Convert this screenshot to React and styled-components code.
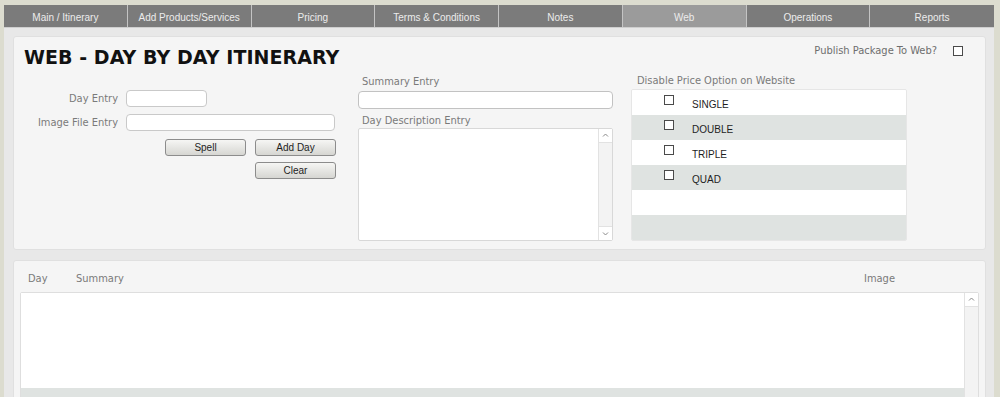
import React from "react";
import styled, { createGlobalStyle } from "styled-components";

const GlobalStyle = createGlobalStyle`
  html, body {
    margin: 0;
    padding: 0;
    background: #dcdccf;
  }
  body {
    font-family: "DejaVu Sans Condensed", "DejaVu Sans", sans-serif;
  }
`;

const tabs = [
  "Main / Itinerary",
  "Add Products/Services",
  "Pricing",
  "Terms & Conditions",
  "Notes",
  "Web",
  "Operations",
  "Reports",
];

const priceOptions = ["SINGLE", "DOUBLE", "TRIPLE", "QUAD", "", ""];

const Page = styled.div`
  margin: 5px 6px 0 4px;
  background: #e8e8e8;
  height: 392px;
  overflow: hidden;
`;

const TabBar = styled.div`
  display: grid;
  grid-template-columns: repeat(8, 1fr);
  height: 22px;
  border-bottom: 1px solid #cfcfcf;
`;

const Tab = styled.div`
  display: flex;
  align-items: center;
  justify-content: center;
  padding-top: 2px;
  box-sizing: border-box;
  background: ${(p) => (p.active ? "#9b9b9b" : "#7b7b7b")};
  color: #ececec;
  font-family: "Liberation Sans", Arial, sans-serif;
  font-size: 10px;
  border-right: 1px solid #c4c4c4;
  &:last-child {
    border-right: none;
  }
`;

const Content = styled.div`
  padding: 8px 8px 0 9px;
  display: flex;
  flex-direction: column;
  gap: 10px;
`;

const Panel = styled.div`
  background: #f5f5f5;
  border: 1px solid #e0e0e0;
  border-radius: 3px;
`;

const TopPanel = styled(Panel)`
  height: 212px;
  padding: 0 10px 0 10px;
`;

const Header = styled.div`
  display: flex;
  justify-content: space-between;
  align-items: flex-start;
  height: 37px;
`;

const Title = styled.h1`
  margin: 9px 0 0 0;
  font-family: "DejaVu Sans", Verdana, sans-serif;
  font-weight: bold;
  font-size: 19px;
  line-height: 22px;
  color: #111;
  letter-spacing: 0.05px;
`;

const Publish = styled.label`
  margin: 7px 12px 0 0;
  display: flex;
  align-items: center;
  gap: 16px;
  font-size: 11px;
  color: #6e6e6e;
`;

const Box = styled.span`
  display: inline-block;
  width: 8px;
  height: 8px;
  border: 1px solid #4a4a4a;
  background: #fff;
`;

const Body = styled.div`
  display: grid;
  grid-template-columns: 326px 255px 276px;
  column-gap: 18px;
  margin-left: -10px;
`;

const LeftForm = styled.div`
  display: grid;
  grid-template-columns: 104px auto;
  column-gap: 8px;
  align-content: start;
  row-gap: 7px;
  padding-top: 16px;
`;

const FieldLabel = styled.span`
  text-align: right;
  font-size: 11px;
  color: #7a7a7a;
  line-height: 17px;
`;

const Input = styled.div`
  width: ${(p) => p.w}px;
  height: 15px;
  background: #fff;
  border: 1px solid #c9c9c9;
  border-radius: 4px;
`;

const ButtonGrid = styled.div`
  grid-column: 2;
  display: grid;
  grid-template-columns: 81px 81px;
  column-gap: 9px;
  row-gap: 6px;
  margin-left: 39px;
  margin-top: 1px;
`;

const Button = styled.button`
  grid-column: ${(p) => p.col || "auto"};
  height: 17px;
  padding: 0;
  border: 1px solid #8c8c8c;
  border-radius: 3px;
  background: linear-gradient(#f6f6f4, #d6d6d2);
  font-family: "Liberation Sans", Arial, sans-serif;
  font-size: 10px;
  color: #1e1e1e;
`;

const Column = styled.div`
  display: flex;
  flex-direction: column;
`;

const ColLabel = styled.span`
  font-size: 11px;
  color: #7a7a7a;
  line-height: 14px;
  height: 14px;
  padding-left: ${(p) => p.pl || 4}px;
  margin-top: ${(p) => p.mt || 0}px;
`;

const WideInput = styled.div`
  height: 16px;
  margin-top: 2px;
  background: #fff;
  border: 1px solid #c2c2c2;
  border-radius: 4px;
`;

const TextArea = styled.div`
  display: flex;
  height: 111px;
  background: #fff;
  border: 1px solid #d8d8d8;
  border-radius: 2px;
`;

const TextBody = styled.div`
  flex: 1;
`;

const ScrollBar = styled.div`
  width: 13px;
  border-left: 1px solid #e2e2e2;
  background: #f3f3f3;
  display: flex;
  flex-direction: column;
  justify-content: space-between;
`;

const ScrollButton = styled.div`
  height: 13px;
  background: #fff;
  display: flex;
  align-items: center;
  justify-content: center;
  border-${(p) => (p.down ? "top" : "bottom")}: 1px solid #e2e2e2;
`;

const Chevron = ({ down }) => (
  <svg width="7" height="5" viewBox="0 0 7 5">
    <path
      d={down ? "M1 1.5 L3.5 4 L6 1.5" : "M1 3.5 L3.5 1 L6 3.5"}
      fill="none"
      stroke="#8a8a8a"
      strokeWidth="1"
    />
  </svg>
);

const OptionTable = styled.div`
  margin-top: 1px;
  border: 1px solid #e6e6e6;
  border-radius: 2px;
  overflow: hidden;
`;

const OptionRow = styled.div`
  display: flex;
  align-items: center;
  height: 25px;
  background: ${(p) => (p.shaded ? "#dfe3e1" : "#fff")};
`;

const OptionBox = styled(Box)`
  margin: 0 18px 6px 32px;
`;

const OptionText = styled.span`
  font-family: "Liberation Sans", Arial, sans-serif;
  font-size: 10px;
  color: #1e1e1e;
  padding-top: 3px;
`;

const ListPanel = styled(Panel)`
  height: 160px;
  padding: 0 6px 0 6px;
`;

const ListHeader = styled.div`
  display: grid;
  grid-template-columns: 48px 788px auto;
  height: 31px;
  align-items: end;
  padding: 0 0 7px 8px;
  box-sizing: border-box;
  font-size: 11px;
  color: #7a7a7a;
`;

const ListBox = styled.div`
  display: flex;
  height: 110px;
  background: #fff;
  border: 1px solid #dedede;
  border-radius: 2px;
`;

const ListRows = styled.div`
  flex: 1;
  display: flex;
  flex-direction: column;
`;

const ListRow = styled.div`
  height: ${(p) => p.h}px;
  background: ${(p) => (p.shaded ? "#dfe3e1" : "#fff")};
`;

export default function App() {
  return (
    <>
      <GlobalStyle />
      <Page>
        <TabBar>
          {tabs.map((t) => (
            <Tab key={t} active={t === "Web"}>
              {t}
            </Tab>
          ))}
        </TabBar>
        <Content>
          <TopPanel>
            <Header>
              <Title>WEB - DAY BY DAY ITINERARY</Title>
              <Publish>
                Publish Package To Web?
                <Box />
              </Publish>
            </Header>
            <Body>
              <LeftForm>
                <FieldLabel>Day Entry</FieldLabel>
                <Input w={79} />
                <FieldLabel>Image File Entry</FieldLabel>
                <Input w={207} />
                <ButtonGrid>
                  <Button>Spell</Button>
                  <Button>Add Day</Button>
                  <Button col={2}>Clear</Button>
                </ButtonGrid>
              </LeftForm>
              <Column>
                <ColLabel mt={1}>Summary Entry</ColLabel>
                <WideInput />
                <ColLabel mt={5}>Day Description Entry</ColLabel>
                <TextArea>
                  <TextBody />
                  <ScrollBar>
                    <ScrollButton>
                      <Chevron />
                    </ScrollButton>
                    <ScrollButton down>
                      <Chevron down />
                    </ScrollButton>
                  </ScrollBar>
                </TextArea>
              </Column>
              <Column>
                <ColLabel pl={6}>Disable Price Option on Website</ColLabel>
                <OptionTable>
                  {priceOptions.map((o, i) => (
                    <OptionRow key={i} shaded={i % 2 === 1}>
                      {o && (
                        <>
                          <OptionBox />
                          <OptionText>{o}</OptionText>
                        </>
                      )}
                    </OptionRow>
                  ))}
                </OptionTable>
              </Column>
            </Body>
          </TopPanel>
          <ListPanel>
            <ListHeader>
              <span>Day</span>
              <span>Summary</span>
              <span>Image</span>
            </ListHeader>
            <ListBox>
              <ListRows>
                <ListRow h={95} />
                <ListRow h={15} shaded />
              </ListRows>
              <ScrollBar>
                <ScrollButton>
                  <Chevron />
                </ScrollButton>
              </ScrollBar>
            </ListBox>
          </ListPanel>
        </Content>
      </Page>
    </>
  );
}
